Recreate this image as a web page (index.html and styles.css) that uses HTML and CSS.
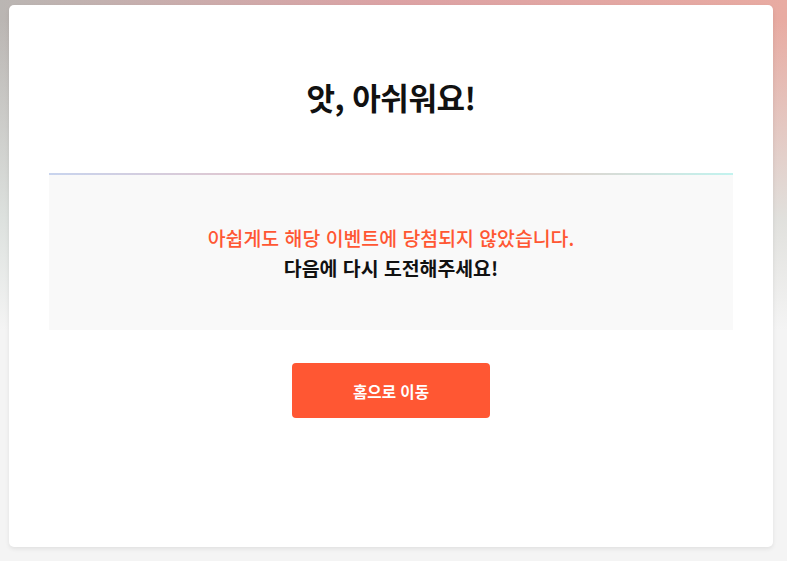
FILE: index.html
```html
<!DOCTYPE html>
<html lang="ko">
<head>
    <meta charset="UTF-8">
    <meta name="viewport" content="width=device-width, initial-scale=1.0">
    <title>이벤트 결과</title>
    <link rel="stylesheet" href="styles.css">
</head>
<body>
    <div class="result-card">
        <h1 class="result-title">앗, 아쉬워요!</h1>
        <div class="result-box">
            <p class="result-fail">아쉽게도 해당 이벤트에 당첨되지 않았습니다.</p>
            <p class="result-next">다음에 다시 도전해주세요!</p>
        </div>
        <div class="result-actions">
            <button class="btn-home">홈으로 이동</button>
        </div>
    </div>
</body>
</html>
```

FILE: styles.css
```css
:root {
    --point-color: #ff5733;
    --box-bg: #f9f9f9;
    --page-bg: #f4f4f4;
}
body {
    margin: 0;
    min-height: 561px;
    font-family: 'Noto Sans CJK KR', 'Noto Sans', sans-serif;
    color: #111;
    background:
        linear-gradient(to bottom, rgba(244, 244, 244, 0) 0, rgba(244, 244, 244, 0) 20px, rgba(224, 229, 226, 0.92) 220px, var(--page-bg) 330px),
        linear-gradient(to right, #bab6b3 0%, #dca2a4 50%, #e8aba2 100%);
    background-color: var(--page-bg);
    padding: 5px 14px 14px 9px;
    box-sizing: border-box;
}
.result-card {
    height: 542px;
    box-sizing: border-box;
    background-color: #fff;
    border-radius: 5px;
    box-shadow: 0 2px 4px rgba(0, 0, 0, 0.08);
    padding: 0 40px;
}
.result-title {
    margin: 0;
    padding-top: 72px;
    height: 96px;
    font-size: 31px;
    font-weight: 700;
    line-height: 40px;
    text-align: center;
    letter-spacing: -0.5px;
}
.result-box {
    background-color: var(--box-bg);
    border-top: 2px solid transparent;
    border-image: linear-gradient(to right, #c8d4ee, #f6bbb4 55%, #c2f3ef) 1;
    border-bottom: 0;
    border-left: 0;
    border-right: 0;
    height: 155px;
    display: flex;
    flex-direction: column;
    justify-content: center;
    align-items: center;
    text-align: center;
}
.result-box p {
    margin: 0;
    font-size: 19.4px;
    line-height: 30px;
}
.result-fail {
    color: var(--point-color);
    font-weight: 500;
}
.result-next {
    font-weight: 700;
}
.result-actions {
    display: flex;
    justify-content: center;
    padding-top: 33px;
}
.btn-home {
    width: 198px;
    height: 55px;
    border: none;
    border-radius: 4px;
    background-color: var(--point-color);
    color: #fff;
    font-family: inherit;
    font-size: 15.6px;
    font-weight: 700;
    cursor: pointer;
}
```
